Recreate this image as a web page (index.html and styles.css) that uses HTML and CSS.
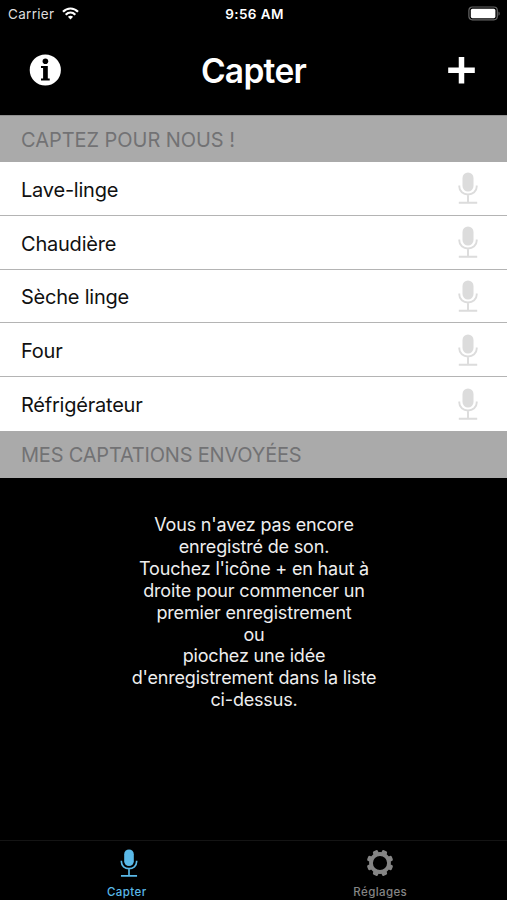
FILE: index.html
```html
<!DOCTYPE html>
<html lang="fr">
<head>
    <meta charset="UTF-8">
    <meta name="viewport" content="width=device-width, initial-scale=1.0">
    <title>Capter</title>
    <link rel="stylesheet" href="styles.css">
</head>
<body>
    <svg class="symbols" width="0" height="0">
        <symbol id="mic" viewBox="0 0 20 32">
            <rect x="4.5" y="0.5" width="11" height="19" rx="5.5" fill="currentColor"/>
            <path d="M1.3 13.5v1.2c0 4.6 3.9 7.8 8.7 7.8s8.7-3.2 8.7-7.8v-1.2M10 22.5V31M0.8 30.7h18.4" fill="none" stroke="currentColor" stroke-width="1.9"/>
        </symbol>
    </svg>

    <header class="header">
        <div class="status-bar">
            <div class="status-left">
                <span class="carrier">Carrier</span>
                <svg class="wifi" width="17" height="13" viewBox="0 0 17 13" fill="none" stroke="#fff" stroke-width="2.2">
                    <path d="M1 4.8c4.3-4.4 10.7-4.4 15 0M3.7 7.7c2.8-2.7 6.8-2.7 9.6 0"/>
                    <path d="M5.9 9.8c1.6-1.3 3.6-1.3 5.2 0l-2.6 2.7z" fill="#fff" stroke="none"/>
                </svg>
            </div>
            <span class="time">9:56 AM</span>
            <div class="status-right">
                <svg width="33" height="16" viewBox="0 0 33 16">
                    <rect x="0.9" y="1" width="28.4" height="12.8" rx="3.5" fill="none" stroke="#666" stroke-width="1.2"/>
                    <rect x="2.8" y="2.8" width="24.6" height="9.4" rx="1.6" fill="#fff"/>
                    <path d="M30.5 5.5c1.6.6 1.6 3.7 0 4.3z" fill="#666"/>
                </svg>
            </div>
        </div>
        <div class="nav-bar">
            <button class="nav-button" aria-label="Informations">
                <svg width="32" height="32" viewBox="0 0 32 32">
                    <circle cx="16.3" cy="16" r="15.6" fill="#fff"/>
                    <circle cx="16.4" cy="7.3" r="2.8" fill="#000"/>
                    <path d="M12 12h6.8v12.6h1.9v1.9H12v-1.9h2.1V13.9H12z" fill="#000"/>
                </svg>
            </button>
            <h1 class="title">Capter</h1>
            <button class="nav-button" aria-label="Ajouter">
                <svg width="28" height="28" viewBox="0 0 28 28">
                    <path d="M13.5 1v26.6M.2 14.3h26.6" stroke="#fff" stroke-width="5.5"/>
                </svg>
            </button>
        </div>
    </header>

    <main class="content">
        <h2 class="section-title">CAPTEZ POUR NOUS !</h2>
        <ul class="ideas">
            <li><span>Lave-linge</span><svg class="row-mic"><use href="#mic"/></svg></li>
            <li><span>Chaudière</span><svg class="row-mic"><use href="#mic"/></svg></li>
            <li><span>Sèche linge</span><svg class="row-mic"><use href="#mic"/></svg></li>
            <li><span>Four</span><svg class="row-mic"><use href="#mic"/></svg></li>
            <li><span>Réfrigérateur</span><svg class="row-mic"><use href="#mic"/></svg></li>
        </ul>
        <h2 class="section-title sent">MES CAPTATIONS ENVOYÉES</h2>
        <p class="empty">
            Vous n'avez pas encore<br>
            enregistré de son.<br>
            Touchez l'icône + en haut à<br>
            droite pour commencer un<br>
            premier enregistrement<br>
            ou<br>
            piochez une idée<br>
            d'enregistrement dans la liste<br>
            ci-dessus.
        </p>
    </main>

    <nav class="tab-bar">
        <a class="tab active">
            <svg class="tab-mic"><use href="#mic"/></svg>
            <span>Capter</span>
        </a>
        <a class="tab">
            <svg class="gear" width="28" height="28" viewBox="-14 -14 28 28" fill="none" stroke="currentColor">
                <circle r="9" stroke-width="3.8"/>
                <g stroke-width="3" stroke-linejoin="round">
                    <path id="teeth" d="M-1.2-9.5v-2.3h2.4v2.3zM-1.2 9.5v2.3h2.4V9.5zM-9.5-1.2h-2.3v2.4h2.3zM9.5-1.2h2.3v2.4H9.5z" transform="rotate(22.5)"/>
                    <use href="#teeth" transform="rotate(45)"/>
                </g>
            </svg>
            <span>Réglages</span>
        </a>
    </nav>
</body>
</html>
```

FILE: styles.css
```css
* {
    box-sizing: border-box;
}

body {
    margin: 0;
    height: 900px;
    display: flex;
    flex-direction: column;
    overflow: hidden;
    background: #000;
    color: #fff;
    font-family: Inter, "Liberation Sans", sans-serif;
}

.symbols {
    display: none;
}

.header {
    height: 115px;
}

.status-bar {
    height: 27px;
    padding: 0 6px 0 8px;
    display: grid;
    grid-template-columns: 1fr auto 1fr;
    align-items: center;
    font-size: 13.5px;
}

.status-left {
    display: flex;
    align-items: center;
    gap: 8px;
}

.carrier {
    color: #ddd;
    letter-spacing: 0.3px;
}

.time {
    font-weight: 600;
    letter-spacing: 0.4px;
}

.status-right {
    display: flex;
    justify-content: flex-end;
}

.nav-bar {
    height: 88px;
    padding: 0 31px 2px 29px;
    display: flex;
    align-items: center;
    justify-content: space-between;
}

.nav-button {
    display: flex;
    padding: 0;
    border: none;
    background: none;
}

.title {
    margin: 0;
    padding: 2px 2px 0 0;
    font-size: 33.5px;
    font-weight: 600;
    letter-spacing: -0.7px;
}

.content {
    flex: 1;
}

.section-title {
    margin: 0;
    height: 47px;
    padding: 1px 21px 0;
    background: #aaa;
    border-top: 1px solid #8f8f8f;
    color: #727274;
    font-size: 20px;
    font-weight: 400;
    line-height: 47px;
    letter-spacing: -0.05px;
}

.sent {
    border-top: none;
    letter-spacing: -0.2px;
}

.ideas {
    margin: 0;
    padding: 0;
    list-style: none;
    background: #fff;
    color: #111;
}

.ideas li {
    height: 53.8px;
    padding: 0 29px 0 21px;
    display: flex;
    align-items: center;
    justify-content: space-between;
    font-size: 20px;
    letter-spacing: -0.22px;
    border-bottom: 1px solid #b4b4b4;
}

.ideas li span {
    padding-top: 3px;
}

.ideas li:last-child {
    border-bottom-color: transparent;
}

.row-mic {
    width: 20px;
    height: 32px;
    color: #dcdcdc;
}

.empty {
    margin: 36px 0 0;
    padding-left: 1px;
    text-align: center;
    font-size: 18px;
    line-height: 21.9px;
    letter-spacing: -0.18px;
    color: #eee;
}

.tab-bar {
    height: 60px;
    display: flex;
    border-top: 1px solid #141414;
}

.tab {
    flex: 1;
    display: flex;
    flex-direction: column;
    align-items: center;
    padding-top: 8px;
    color: #858585;
    font-size: 11.5px;
    font-weight: 500;
    letter-spacing: 0.4px;
}

.tab span {
    margin-top: 7px;
    line-height: 16px;
}

.tab-mic {
    width: 28px;
    height: 28px;
    margin-left: 4px;
}

.active {
    color: #5ab9e8;
}
```
